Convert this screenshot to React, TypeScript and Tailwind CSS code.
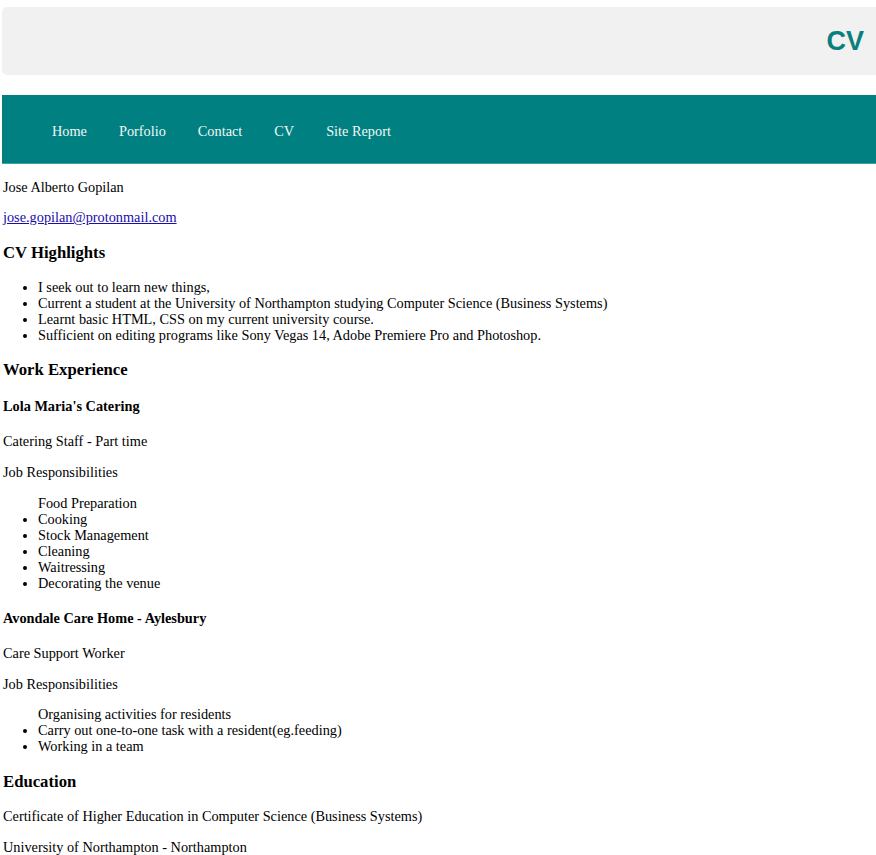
const links = ["Home", "Porfolio", "Contact", "CV", "Site Report"];

const highlights = [
  "I seek out to learn new things,",
  "Current a student at the University of Northampton studying Computer Science (Business Systems)",
  "Learnt basic HTML, CSS on my current university course.",
  "Sufficient on editing programs like Sony Vegas 14, Adobe Premiere Pro and Photoshop.",
];

const H3 = ({ children }: { children: React.ReactNode }) => (
  <h3 className="text-[16.7px] leading-[19px] font-bold my-[17.2px]">{children}</h3>
);

const H4 = ({ children }: { children: React.ReactNode }) => (
  <h4 className="text-[14.3px] leading-4 font-bold my-[19.2px]">{children}</h4>
);

const P = ({ children }: { children: React.ReactNode }) => (
  <p className="my-[14.7px]">{children}</p>
);

const Duties = ({ first, items }: { first: string; items: string[] }) => (
  <ul className="list-disc pl-[35px] my-[14.7px]">
    <li className="list-none">{first}</li>
    {items.map((i) => (
      <li key={i}>{i}</li>
    ))}
  </ul>
);

export default function App() {
  return (
    <div className="bg-white min-h-[855px] text-[14.3px] leading-4 text-black font-['Liberation_Serif',serif]">
      <header className="ml-[2px] pt-[7px]">
        <div className="h-[68px] bg-[#f1f1f1] rounded-l-[5px] flex items-center justify-end pr-[12px]">
          <h1 className="font-['Liberation_Sans',Arial,sans-serif] font-bold text-[27px] text-[#0a7f7b]">CV</h1>
        </div>
        <nav className="mt-[20px] h-[69px] bg-[#008080] border-b border-[#3f9f9c] flex items-center pl-[34px]">
          {links.map((l) => (
            <a key={l} className="px-4 text-[#f3f7f7] text-[14.3px] pt-[3px]">
              {l}
            </a>
          ))}
        </nav>
      </header>

      <main className="pl-[3px] overflow-hidden">
        <P>Jose Alberto Gopilan</P>
        <p className="my-[14.7px]">
          <a className="text-[#1a0dab] underline">jose.gopilan@protonmail.com</a>
        </p>

        <H3>CV Highlights</H3>
        <ul className="list-disc pl-[35px] my-[14px]">
          {highlights.map((h) => (
            <li key={h}>{h}</li>
          ))}
        </ul>

        <H3>Work Experience</H3>
        <H4>Lola Maria's Catering</H4>
        <P>Catering Staff - Part time</P>
        <P>Job Responsibilities</P>
        <Duties
          first="Food Preparation"
          items={["Cooking", "Stock Management", "Cleaning", "Waitressing", "Decorating the venue"]}
        />

        <H4>Avondale Care Home - Aylesbury</H4>
        <P>Care Support Worker</P>
        <P>Job Responsibilities</P>
        <Duties
          first="Organising activities for residents"
          items={["Carry out one-to-one task with a resident(eg.feeding)", "Working in a team"]}
        />

        <H3>Education</H3>
        <P>Certificate of Higher Education in Computer Science (Business Systems)</P>
        <P>University of Northampton - Northampton</P>
      </main>
    </div>
  );
}
